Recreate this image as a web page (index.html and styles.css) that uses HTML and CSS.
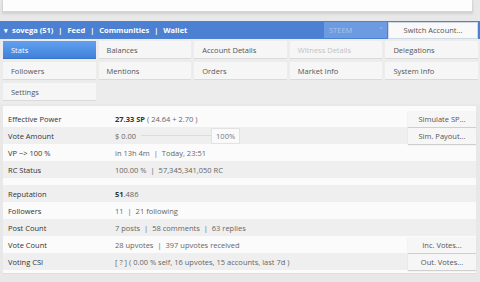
FILE: index.html
```html
<!DOCTYPE html>
<html lang="en">
<head>
  <meta charset="UTF-8">
  <meta name="viewport" content="width=device-width, initial-scale=1.0">
  <title>Account Stats</title>
  <link rel="stylesheet" href="styles.css">
</head>
<body>
  <div class="topbox"></div>

  <header class="navbar">
    <div class="nav-links">
      <span class="caret">&#9662;</span>
      <a href="#">sovega (51)</a> <span class="sep">|</span>
      <a href="#">Feed</a> <span class="sep">|</span>
      <a href="#">Communities</a> <span class="sep">|</span>
      <a href="#">Wallet</a>
    </div>
    <div class="chain-select">STEEM <span class="arrow">&#8964;</span></div>
    <button class="switch-btn">Switch Account...</button>
  </header>

  <div class="tabs">
    <div class="tab active">Stats</div>
    <div class="tab">Balances</div>
    <div class="tab">Account Details</div>
    <div class="tab disabled">Witness Details</div>
    <div class="tab">Delegations</div>
    <div class="tab">Followers</div>
    <div class="tab">Mentions</div>
    <div class="tab">Orders</div>
    <div class="tab">Market Info</div>
    <div class="tab">System Info</div>
    <div class="tab">Settings</div>
  </div>

  <div class="panel">
    <table class="stats">
      <tr>
        <td class="label">Effective Power</td>
        <td class="value"><b>27.33 SP</b> ( 24.64 + 2.70 )</td>
        <td class="action"><button>Simulate SP...</button></td>
      </tr>
      <tr class="odd">
        <td class="label">Vote Amount</td>
        <td class="value">
          <div class="vote">
            <span>$ 0.00</span>
            <div class="track"></div>
            <span class="pct">100%</span>
          </div>
        </td>
        <td class="action"><button>Sim. Payout...</button></td>
      </tr>
      <tr>
        <td class="label">VP ~&gt; 100 %</td>
        <td class="value">in 13h 4m <span class="sep">|</span> Today, 23:51</td>
        <td class="action"></td>
      </tr>
      <tr class="odd">
        <td class="label">RC Status</td>
        <td class="value">100.00 % <span class="sep">|</span> 57,345,341,050 RC</td>
        <td class="action"></td>
      </tr>
    </table>

    <table class="stats second">
      <tr class="odd">
        <td class="label">Reputation</td>
        <td class="value"><b>51</b>.486</td>
        <td class="action"></td>
      </tr>
      <tr>
        <td class="label">Followers</td>
        <td class="value">11 <span class="sep">|</span> 21 following</td>
        <td class="action"></td>
      </tr>
      <tr class="odd">
        <td class="label">Post Count</td>
        <td class="value">7 posts <span class="sep">|</span> 58 comments <span class="sep">|</span> 63 replies</td>
        <td class="action"></td>
      </tr>
      <tr>
        <td class="label">Vote Count</td>
        <td class="value">28 upvotes <span class="sep">|</span> 397 upvotes received</td>
        <td class="action"><button>Inc. Votes...</button></td>
      </tr>
      <tr class="odd">
        <td class="label">Voting CSI</td>
        <td class="value">[ ? ] ( 0.00 % self, 16 upvotes, 15 accounts, last 7d )</td>
        <td class="action"><button>Out. Votes...</button></td>
      </tr>
    </table>
  </div>
</body>
</html>
```

FILE: styles.css
```css
body {
  font-family: "Open Sans", Arial, sans-serif;
  font-size: 7.5px;
  margin: 0;
  padding: 0;
  background-color: #e8e8e8;
  color: #444;
}

.topbox {
  height: 11px;
  margin: 0 7px 0 2px;
  background-color: #fdfdfd;
  border: 1px solid #d6d6d6;
  border-top: none;
  box-shadow: 0 2px 2px #d0d0d0;
}

.navbar {
  display: flex;
  align-items: center;
  height: 18px;
  margin-top: 9px;
  padding-left: 4px;
  background-color: #4b80d3;
}

.nav-links {
  flex: 1;
  color: #fff;
  font-weight: bold;
}

.nav-links a {
  color: #fff;
  text-decoration: none;
}

.nav-links .sep {
  margin: 0 3px;
}

.caret {
  font-size: 7px;
  margin-right: 2px;
}

.chain-select {
  width: 58px;
  height: 16px;
  line-height: 16px;
  padding-left: 5px;
  background-color: #6d9be2;
  color: #a9c3ea;
  position: relative;
}

.chain-select .arrow {
  position: absolute;
  right: 3px;
  top: -3px;
  font-size: 7px;
}

.switch-btn {
  width: 90px;
  height: 17px;
  margin: 0 2px 0 1px;
  padding: 0;
  border: 1px solid #cfd8e6;
  background-color: #f9f9f9;
  color: #555;
  font-family: inherit;
  font-size: 7.5px;
}

.tabs {
  display: grid;
  grid-template-columns: repeat(5, 1fr);
  gap: 3px 3px;
  padding: 2px 2px 3px 3px;
  background-color: #ececec;
}

.tab {
  height: 18px;
  line-height: 18px;
  padding-left: 8px;
  background-color: #f6f6f6;
  border-bottom: 1px solid #dadada;
  box-sizing: border-box;
  color: #555;
}

.tab.active {
  background: linear-gradient(#62a0ee, #3f82dc);
  color: #fff;
  border-bottom-color: #3a74c4;
}

.tab.disabled {
  color: #c2c2c2;
}

.panel {
  margin: 2px 4px 0 3px;
  padding: 4px 0 3px;
  background-color: #fbfbfb;
  border-bottom: 1px solid #dedede;
}

.stats {
  width: 100%;
  border-collapse: collapse;
}

.stats.second {
  margin-top: 7px;
}

.stats td {
  height: 17px;
  padding: 0;
  vertical-align: middle;
}

.stats tr.odd td {
  background-color: #efefef;
}

.label {
  width: 107px;
  padding-left: 5px !important;
  color: #333;
}

.value {
  color: #666;
}

.value b {
  color: #333;
}

.value .sep {
  margin: 0 2px;
}

.action {
  width: 70px;
  text-align: right;
}

.action button {
  width: 68px;
  height: 16px;
  padding: 0;
  border: none;
  background-color: #f6f6f6;
  box-shadow: 0 1px 1px #cfcfcf;
  color: #555;
  font-family: inherit;
  font-size: 7.5px;
}

.vote {
  display: flex;
  align-items: center;
}

.track {
  width: 70px;
  height: 1px;
  margin-left: 5px;
  background-color: #dcdcdc;
}

.pct {
  padding: 2px 4px;
  background-color: #fafafa;
  border: 1px solid #e2e2e2;
  color: #777;
}
```
